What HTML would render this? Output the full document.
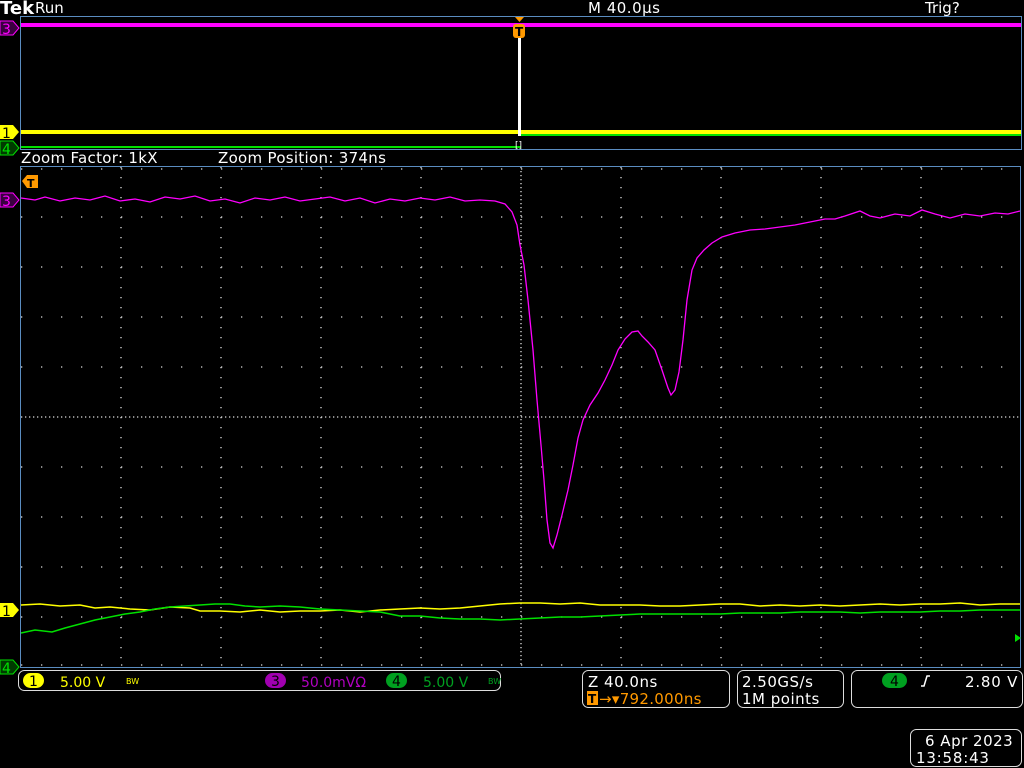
<!DOCTYPE html>
<html><head><meta charset="utf-8"><style>
html,body{margin:0;padding:0;background:#000;width:1024px;height:768px;overflow:hidden}
svg{display:block}
text{font-family:"DejaVu Sans","Liberation Sans",sans-serif}
</style></head><body>
<svg width="1024" height="768" viewBox="0 0 1024 768" xmlns="http://www.w3.org/2000/svg">
<rect width="1024" height="768" fill="#000"/>
<text x="0" y="14" font-family="Liberation Serif,serif" font-size="18" font-weight="bold" fill="#fff">Tek</text>
<text x="35" y="13" font-size="15" fill="#fff">Run</text>
<text x="588" y="13" font-size="15" fill="#fff" letter-spacing="0.5">M 40.0µs</text>
<text x="925" y="13" font-size="15" fill="#fff">Trig?</text>
<rect x="20.5" y="16.5" width="1001" height="133" fill="none" stroke="#5a8cc0" stroke-width="1"/>
<rect x="21" y="23" width="1000" height="4" fill="#ff00ff"/>
<rect x="21" y="130" width="1000" height="4" fill="#ffff00"/>
<rect x="521" y="134" width="500" height="2" fill="#00e000"/>
<rect x="21" y="146" width="500" height="2" fill="#00e000"/>
<rect x="518" y="30" width="3" height="106" fill="#fff"/>
<path d="M515 17h9l-4.5 5z" fill="#ff9900"/>
<rect x="513" y="24" width="12" height="14" rx="3" fill="#ff9900"/>
<text x="515" y="36" font-size="12" font-weight="bold" fill="#000">T</text>
<text x="515" y="148" font-size="9" fill="#fff">[]</text>
<path d="M0 21h13l6 7-6 7H0z" fill="#3a0040" stroke="#ff00ff"/><text x="2" y="34" font-size="14" fill="#ff00ff">3</text>
<path d="M0 125h13l6 7-6 7H0z" fill="#ffff00"/><text x="2" y="138" font-size="14" fill="#000">1</text>
<path d="M0 141h13l6 7-6 7H0z" fill="#003a00" stroke="#00e000"/><text x="2" y="154" font-size="14" fill="#00e000">4</text>
<text x="21" y="163" font-size="15" fill="#fff" letter-spacing="0.3">Zoom Factor: 1kX</text>
<text x="218" y="163" font-size="15" fill="#fff" letter-spacing="0.3">Zoom Position: 374ns</text>
<rect x="20.5" y="166.5" width="1000" height="501" fill="none" stroke="#5a8cc0" stroke-width="1"/>
<g stroke="#ddd" stroke-width="1.3" fill="none">
<path d="M121 167V667M221 167V667M321 167V667M421 167V667M621 167V667M721 167V667M821 167V667M921 167V667" stroke-dasharray="1.3 8.7"/>
<path d="M21 217H1021M21 267H1021M21 317H1021M21 367H1021M21 467H1021M21 517H1021M21 567H1021M21 617H1021" stroke-dasharray="1.3 18.7"/>
<path d="M21 417H1021M521 167V667" stroke-dasharray="1.3 2.7"/>
<path d="M21 169H1021M21 665H1021" stroke-dasharray="1.3 18.7"/>
</g>
<polyline fill="none" stroke="#ff00ff" stroke-width="1.3" points="21,198 35,200 45,197 60,201 75,198 90,200 105,196 120,201 135,199 150,202 165,197 180,199 195,196 210,201 225,199 240,203 255,198 270,200 285,197 300,201 315,199 330,197 345,201 360,198 375,203 390,199 405,201 420,198 435,200 450,197 465,201 480,200 495,201 505,204 512,212 517,225 520,245 524,265 528,300 533,350 537,400 541,445 544,480 547,520 550,543 553,548 557,535 562,515 568,490 573,465 578,438 583,420 590,405 598,393 605,380 612,365 618,350 625,339 632,332 638,331 642,336 648,342 655,350 662,370 668,388 671,395 675,390 679,372 683,340 687,300 692,270 697,258 704,250 712,243 722,237 735,233 750,230 765,229 780,227 795,225 810,222 825,219 835,219 845,216 860,211 870,216 880,218 895,214 910,216 922,210 935,214 950,218 965,214 980,216 995,213 1008,214 1020,211"/>
<polyline fill="none" stroke="#ffff00" stroke-width="1.5" points="21,605 40,604 60,606 80,605 95,608 110,607 130,609 150,610 170,607 190,608 200,611 220,611 240,612 260,610 280,612 300,611 320,611 340,610 360,612 380,610 400,609 420,608 440,609 460,608 480,606 500,604 520,603 540,603 560,604 580,603 600,605 620,605 640,605 660,606 680,606 700,605 720,604 740,604 760,606 780,605 800,606 820,605 840,606 860,605 880,604 900,605 920,604 940,604 960,603 980,605 1000,604 1020,604"/>
<polyline fill="none" stroke="#00e000" stroke-width="1.5" points="21,633 35,630 52,632 65,628 80,624 95,620 110,617 125,614 140,612 155,609 170,607 185,606 200,605 215,604 230,604 245,606 260,607 280,606 300,607 320,609 340,610 360,611 380,612 400,616 420,616 440,618 460,619 480,619 500,620 520,619 540,618 560,617 580,617 600,616 620,615 640,614 660,614 680,614 700,614 720,614 740,613 760,613 780,613 800,612 820,612 840,612 860,613 880,612 900,612 920,612 940,611 960,611 980,610 1000,610 1020,610"/>
<path d="M1021 638l-6-4v8z" fill="#00e000"/>
<path d="M22 181l5-6h11v13H27z" fill="#ff9900"/><text x="27" y="187" font-size="11" font-weight="bold" fill="#000">T</text>
<path d="M0 193h13l6 7-6 7H0z" fill="#3a0040" stroke="#ff00ff"/><text x="2" y="206" font-size="14" fill="#ff00ff">3</text>
<path d="M0 603h13l6 7-6 7H0z" fill="#ffff00"/><text x="2" y="616" font-size="14" fill="#000">1</text>
<path d="M0 660h13l6 7-6 7H0z" fill="#003a00" stroke="#00e000"/><text x="2" y="673" font-size="14" fill="#00e000">4</text>
<rect x="18.5" y="670.5" width="482" height="20" rx="6" fill="none" stroke="#ddd"/>
<rect x="23" y="673" width="21" height="15" rx="7.5" fill="#ffff00"/><text x="29" y="686" font-size="14" fill="#000">1</text>
<text x="60" y="687" font-size="14" fill="#ffff00">5.00 V</text>
<text x="126" y="684" font-size="8" fill="#ffff00">BW</text>
<rect x="265" y="673" width="21" height="15" rx="7.5" fill="#a000b0"/><text x="271" y="686" font-size="14" fill="#000">3</text>
<text x="301" y="687" font-size="14" fill="#b000c0">50.0mVΩ</text>
<rect x="386" y="673" width="21" height="15" rx="7.5" fill="#00a020"/><text x="392" y="686" font-size="14" fill="#000">4</text>
<text x="423" y="687" font-size="14" fill="#00a020">5.00 V</text>
<text x="488" y="684" font-size="8" fill="#00a020">BW</text>
<rect x="582.5" y="670.5" width="147" height="37" rx="6" fill="none" stroke="#ddd"/>
<text x="588" y="687" font-size="15" fill="#fff" letter-spacing="0.5">Z 40.0ns</text>
<rect x="587" y="691" width="11" height="14" fill="#ff9900"/><text x="588" y="703" font-size="12" font-weight="bold" fill="#000">T</text>
<text x="599" y="704" font-size="15" fill="#ff9900" letter-spacing="0.3">→▾792.000ns</text>
<rect x="737.5" y="670.5" width="106" height="37" rx="6" fill="none" stroke="#ddd"/>
<text x="742" y="687" font-size="15" fill="#fff" letter-spacing="0.5">2.50GS/s</text>
<text x="742" y="704" font-size="15" fill="#fff" letter-spacing="0.5">1M points</text>
<rect x="851.5" y="670.5" width="171" height="37" rx="6" fill="none" stroke="#ddd"/>
<rect x="882" y="673" width="25" height="15" rx="7.5" fill="#00a020"/><text x="890" y="686" font-size="14" fill="#000">4</text>
<path d="M921 686h3l3-10h3" stroke="#fff" stroke-width="1.5" fill="none"/>
<text x="965" y="687" font-size="15" fill="#fff" letter-spacing="0.8">2.80 V</text>
<rect x="910.5" y="729.5" width="111" height="37" rx="6" fill="none" stroke="#ddd"/>
<text x="925" y="746" font-size="15" fill="#fff" letter-spacing="0.5">6 Apr 2023</text>
<text x="916" y="763" font-size="15" fill="#fff" letter-spacing="0.8">13:58:43</text>
</svg>
</body></html>
